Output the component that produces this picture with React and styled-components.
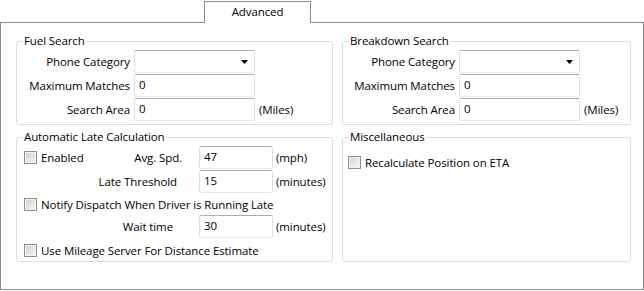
import React from "react";
import styled, { createGlobalStyle } from "styled-components";

const GlobalStyle = createGlobalStyle`
  html, body {
    margin: 0;
    padding: 0;
    background: #ffffff;
  }
  body {
    font-family: "Open Sans", "Noto Sans", sans-serif;
    font-size: 11.5px;
    letter-spacing: -0.1px;
    color: #000;
  }
`;

const Window = styled.div`
  width: 644px;
  height: 291px;
  padding-top: 1px;
  box-sizing: border-box;
  background: #fff;
`;

const TabStrip = styled.div`
  display: flex;
  padding-left: 204px;
  height: 21px;
`;

const Tab = styled.div`
  position: relative;
  z-index: 1;
  width: 107px;
  height: 22px;
  box-sizing: border-box;
  border: 1px solid #898c95;
  border-bottom: none;
  background: #fff;
  display: flex;
  align-items: center;
  justify-content: center;
  line-height: 16px;
  padding-bottom: 1px;
`;

const Panel = styled.div`
  width: 644px;
  height: 268px;
  box-sizing: border-box;
  border: 1px solid #898c95;
  padding: 10px 12px 0 15px;
  display: grid;
  grid-template-columns: 317px 289px;
  grid-template-rows: auto 133px;
  column-gap: 9px;
  row-gap: 4px;
  align-content: start;
`;

const Group = styled.fieldset`
  margin: 0;
  padding: ${(p) => p.$pad || "0"};
  border: 1px solid #d5dfe5;
  border-radius: 3px;
  min-width: 0;
  box-sizing: border-box;

  legend {
    margin-left: 6px;
    padding: 0 1px;
    line-height: 16px;
  }
`;

const FormGrid = styled.div`
  display: grid;
  grid-template-columns: ${(p) => p.$labelWidth}px 121px auto;
  grid-auto-rows: 23px;
  column-gap: 4px;
  row-gap: 1px;
  align-items: center;
`;

const FieldLabel = styled.span`
  justify-self: end;
  white-space: nowrap;
  margin-right: ${(p) => p.$mr || 0}px;
`;

const TextBox = styled.div`
  height: 23px;
  box-sizing: border-box;
  border: 1px solid #dbdfe6;
  border-top-color: #abadb3;
  border-bottom-color: #e3e9ef;
  border-radius: 2px;
  background: #fff;
  padding: 0 4px;
  display: flex;
  align-items: center;
  line-height: 16px;
  padding-bottom: 2px;
`;

const Select = styled(TextBox)`
  justify-content: flex-end;
  padding-right: 6px;
  padding-bottom: 0;
`;

const Unit = styled.span`
  white-space: nowrap;
`;

const LateGrid = styled.div`
  display: grid;
  grid-template-columns: 172px 74px auto;
  grid-template-rows: 23px 23px 20px 23px 23px;
  column-gap: 3px;
  row-gap: 1px;
  align-items: center;
  padding: 1px 0 0 7px;
`;

const SplitCell = styled.div`
  display: flex;
  align-items: center;
  justify-content: space-between;
`;

const FullRow = styled.div`
  grid-column: 1 / -1;
`;

const CheckRow = styled.label`
  display: flex;
  align-items: center;
  gap: 4px;
  height: ${(p) => p.$h || 20}px;
  white-space: nowrap;
`;

const Box = styled.span`
  width: 13px;
  height: 13px;
  box-sizing: border-box;
  border: 1px solid #8e8f8f;
  background: linear-gradient(135deg, #cfcfcf 0%, #e6e6e6 55%, #f7f7f7 100%);
  box-shadow: inset 0 0 0 1px #f4f4f4;
  flex: none;
`;

const MiscBody = styled.div`
  padding: 6px 0 0 5px;
`;

function Arrow() {
  return (
    <svg width="7" height="4" viewBox="0 0 7 4">
      <path d="M0 0 H7 L3.5 4 Z" fill="#000" />
    </svg>
  );
}

function SearchGroup({ title, labelWidth }) {
  return (
    <Group $pad="1px 0 3px 0">
      <legend>{title}</legend>
      <FormGrid $labelWidth={labelWidth}>
        <FieldLabel>Phone Category</FieldLabel>
        <Select>
          <Arrow />
        </Select>
        <span />
        <FieldLabel>Maximum Matches</FieldLabel>
        <TextBox>0</TextBox>
        <span />
        <FieldLabel>Search Area</FieldLabel>
        <TextBox>0</TextBox>
        <Unit>(Miles)</Unit>
      </FormGrid>
    </Group>
  );
}

function Check({ label, h }) {
  return (
    <CheckRow $h={h}>
      <Box />
      {label}
    </CheckRow>
  );
}

export default function App() {
  return (
    <>
      <GlobalStyle />
      <Window>
        <TabStrip>
          <Tab>Advanced</Tab>
        </TabStrip>
        <Panel>
          <SearchGroup title="Fuel Search" labelWidth={113} />
          <SearchGroup title="Breakdown Search" labelWidth={112} />

          <Group>
            <legend>Automatic Late Calculation</legend>
            <LateGrid>
              <SplitCell>
                <Check label="Enabled" />
                <FieldLabel $mr={14}>Avg. Spd.</FieldLabel>
              </SplitCell>
              <TextBox>47</TextBox>
              <Unit>(mph)</Unit>

              <FieldLabel $mr={19}>Late Threshold</FieldLabel>
              <TextBox>15</TextBox>
              <Unit>(minutes)</Unit>

              <FullRow>
                <Check label="Notify Dispatch When Driver is Running Late" />
              </FullRow>

              <FieldLabel $mr={23}>Wait time</FieldLabel>
              <TextBox>30</TextBox>
              <Unit>(minutes)</Unit>

              <FullRow>
                <Check label="Use Mileage Server For Distance Estimate" h={23} />
              </FullRow>
            </LateGrid>
          </Group>

          <Group>
            <legend>Miscellaneous</legend>
            <MiscBody>
              <Check label="Recalculate Position on ETA" h={23} />
            </MiscBody>
          </Group>
        </Panel>
      </Window>
    </>
  );
}
